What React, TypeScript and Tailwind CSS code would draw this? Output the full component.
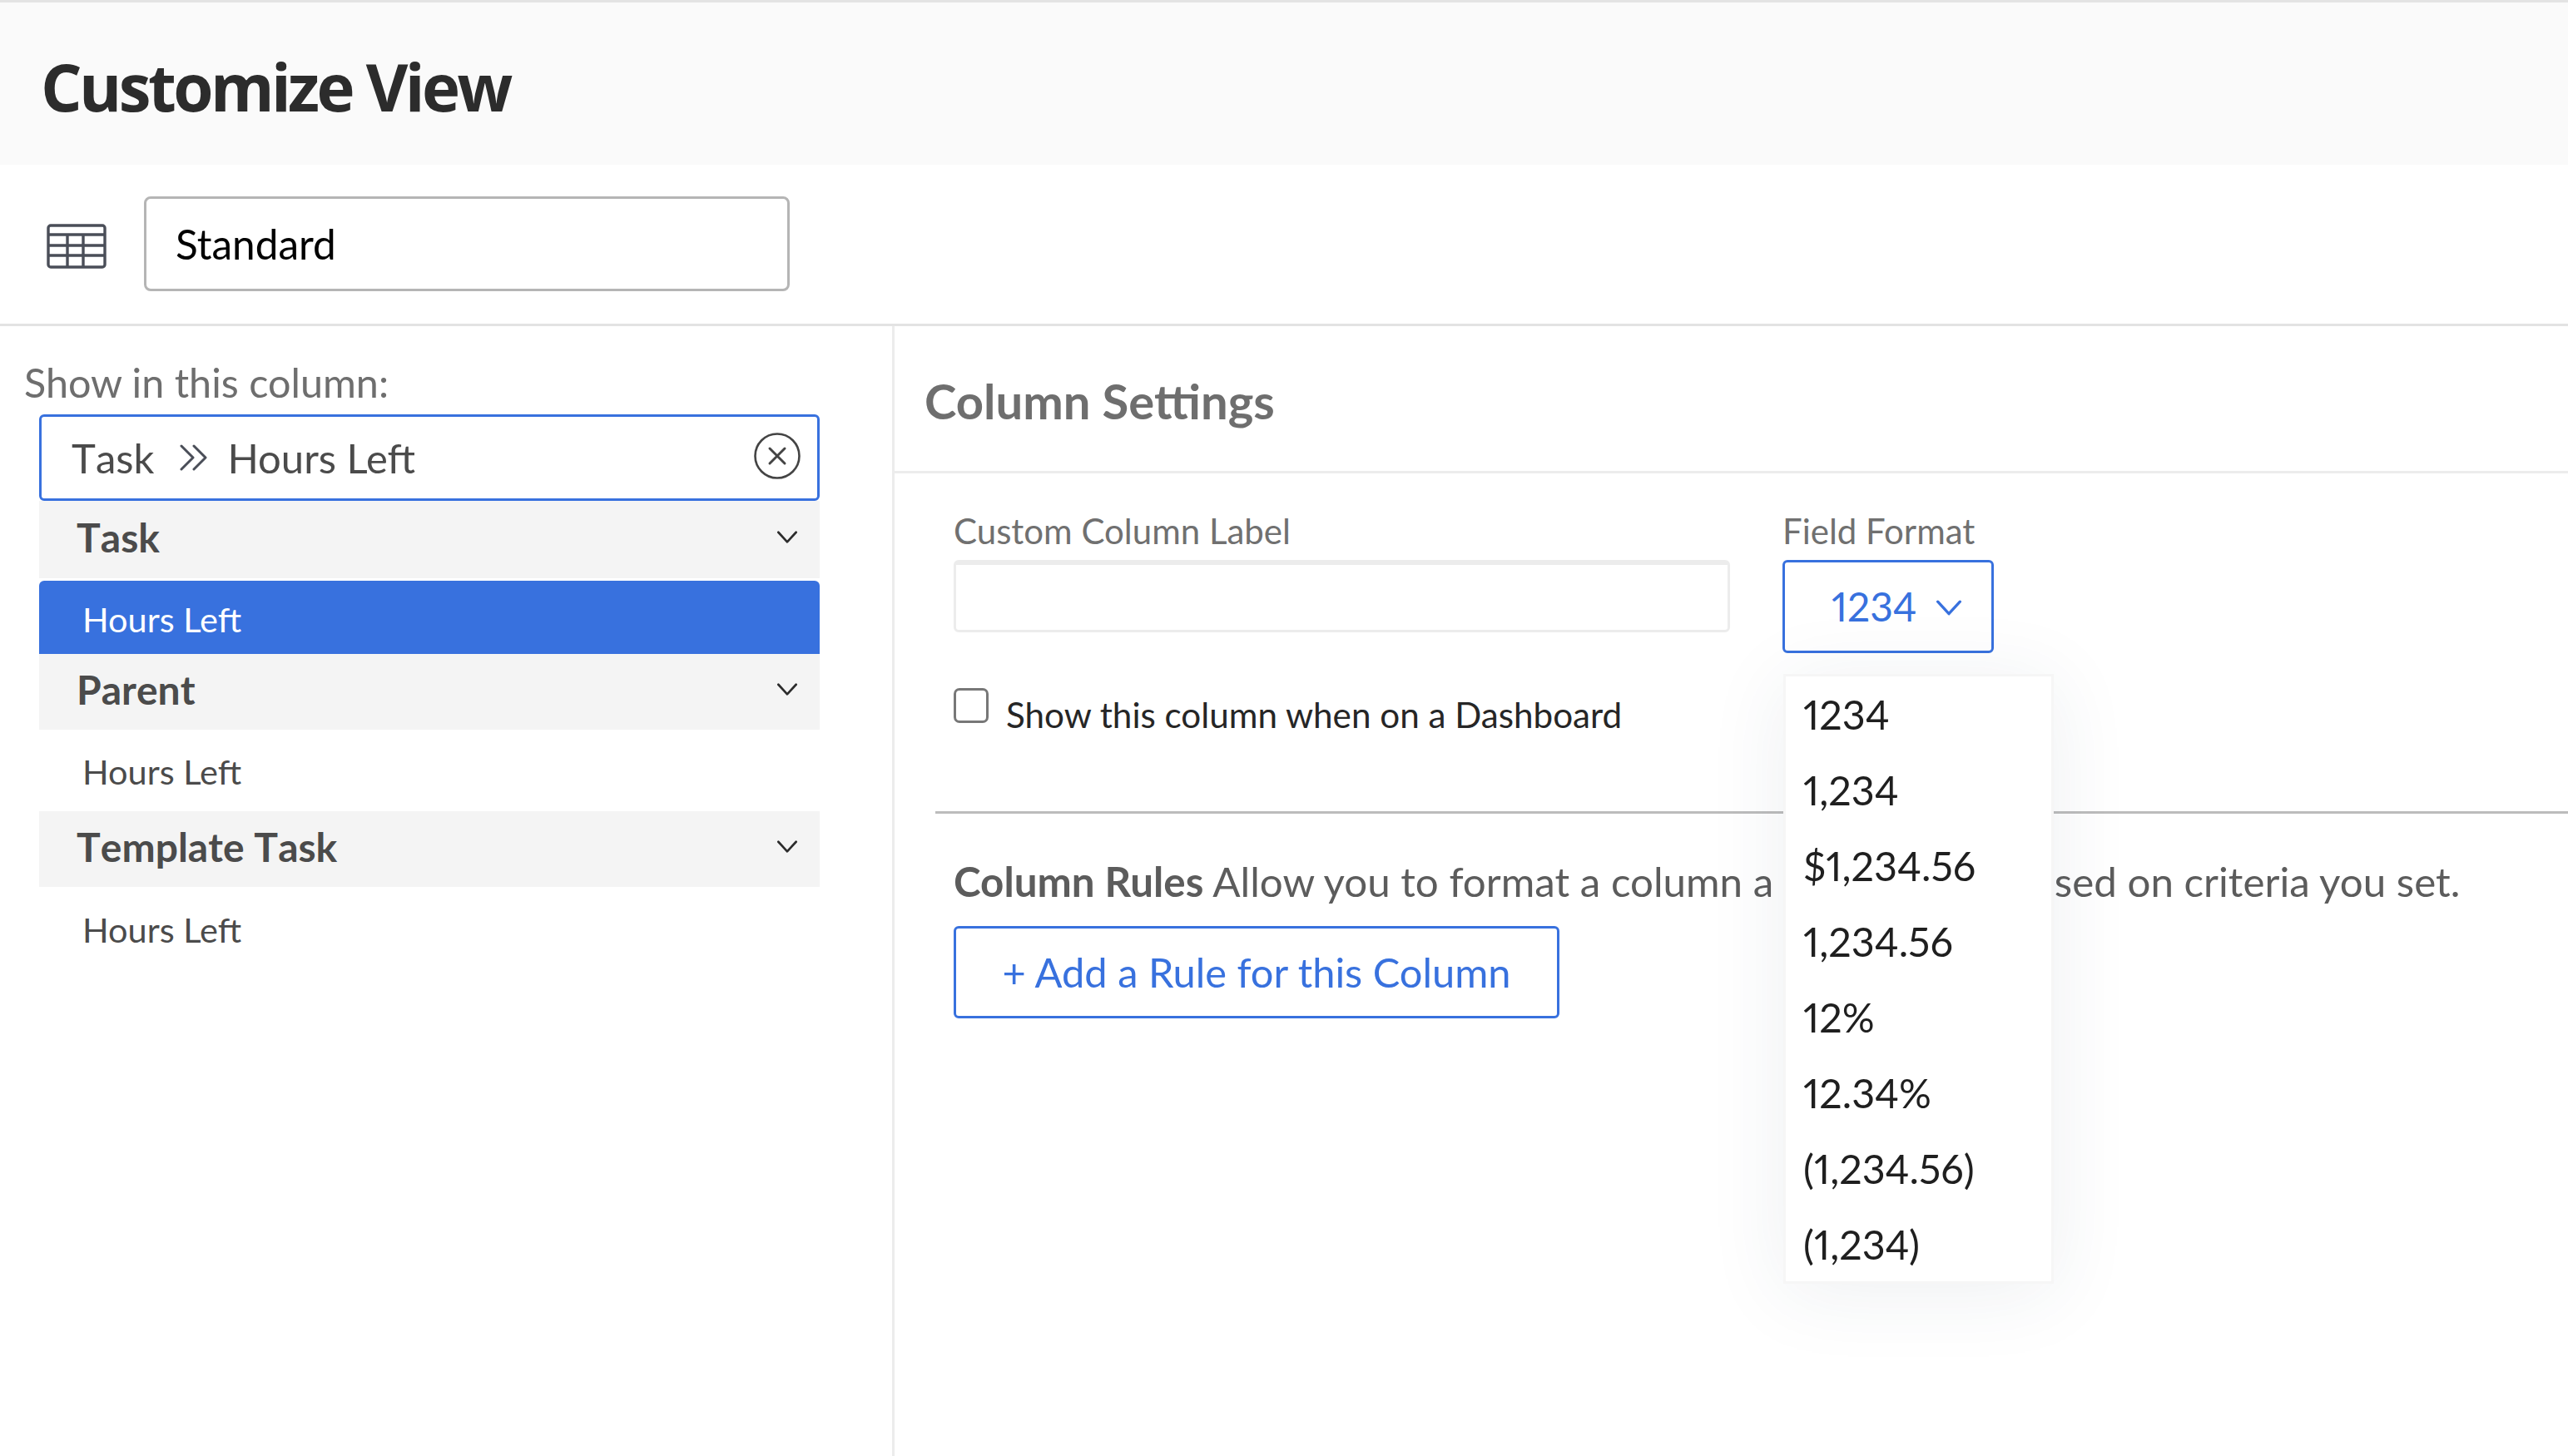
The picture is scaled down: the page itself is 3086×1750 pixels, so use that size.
const F = "font-['Lato','Liberation_Sans',sans-serif]";

function Chevron({ className }: { className: string }) {
  return (
    <svg viewBox="0 0 28 18" className={className} fill="none" stroke="currentColor" strokeWidth="3" strokeLinecap="round" strokeLinejoin="round">
      <path d="M2 2 L14 15 L26 2" />
    </svg>
  );
}

function GroupHeader({ label, h }: { label: string; h: string }) {
  return (
    <div className={`${h} bg-[#f4f4f4] flex items-center justify-between pl-[45px] pr-[26px] pb-[4px] text-[#4b4b4b]`}>
      <span className="text-[48px] font-bold leading-none [font-kerning:none]">{label}</span>
      <Chevron className="w-[26px] h-[16px] text-[#2c2c2c]" />
    </div>
  );
}

function Item({ label, active, h }: { label: string; active?: boolean; h: string }) {
  return (
    <div className={`${h} flex items-center pl-[52px] text-[41.5px] leading-none ${active ? "bg-[#3871de] text-white rounded-t-[6px] pt-[6px]" : "text-[#4b4b4b]"}`}>
      {label}
    </div>
  );
}

const formats = ["1234", "1,234", "$1,234.56", "1,234.56", "12%", "12.34%", "(1,234.56)", "(1,234)"];

export default function App() {
  return (
    <div className={`${F} w-[3086px] h-[1750px] bg-white overflow-hidden flex flex-col`}>
      <header className="h-[198px] shrink-0 border-t-[3px] border-[#e3e3e3] bg-[#fafafa] flex items-center pl-[49px] pt-[6px]">
        <h1 className="font-['Open_Sans',sans-serif] text-[78px] font-bold leading-none text-[#2c2c2c] tracking-[-3.6px]">Customize View</h1>
      </header>

      <div className="h-[194px] shrink-0 border-b-[3px] border-[#e3e3e3] flex items-center pl-[56px]">
        <svg viewBox="0 0 72 54" className="w-[72px] h-[54px] text-[#4a4e58] mt-[4px]" fill="none" stroke="currentColor" strokeWidth="3.4">
          <rect x="2" y="2" width="68" height="50" rx="3" />
          <path d="M2 13 H70 M2 26 H70 M2 38 H70 M25 13 V52 M44 13 V52" />
        </svg>
        <div className="ml-[45px] w-[776px] h-[114px] mb-[2px] border-[3px] border-[#b5b5b5] rounded-[8px] flex items-center pl-[35px] pt-[2px] text-[49.5px] text-black leading-none">
          Standard
        </div>
      </div>

      <div className="flex-1 flex min-h-0">
        <aside className="w-[1075px] shrink-0 border-r-[3px] border-[#ececec] flex flex-col pt-[43px]">
          <div className="pl-[29px] text-[48.5px] leading-none text-[#6e6e6e]">Show in this column:</div>
          <div className="mt-[14px] ml-[47px] w-[938px] flex flex-col">
            <div className="h-[104px] border-[3px] border-[#3871de] rounded-[6px] flex items-center pl-[36px] pr-[20px] text-[49px] text-[#4b4b4b] leading-none">
              <span className="[font-kerning:none] mt-[2px]">Task</span>
              <svg viewBox="0 0 36 32" className="w-[36px] h-[32px] ml-[30px] mr-[22px] text-[#4a4e58]" fill="none" stroke="currentColor" strokeWidth="3" strokeLinecap="round" strokeLinejoin="round">
                <path d="M3 2 L17 16 L3 30 M18 2 L32 16 L18 30" />
              </svg>
              <span className="mt-[2px]">Hours Left</span>
              <svg viewBox="0 0 56 56" className="w-[56px] h-[56px] ml-auto mb-[4px] text-[#444]" fill="none" stroke="currentColor" strokeWidth="2.6" strokeLinecap="round">
                <circle cx="28" cy="28" r="26.5" />
                <path d="M19 19 L37 37 M37 19 L19 37" strokeWidth="3" />
              </svg>
            </div>
            <GroupHeader label="Task" h="h-[93px]" />
            <div className="h-[3px]" />
            <Item label="Hours Left" active h="h-[88px]" />
            <GroupHeader label="Parent" h="h-[91px]" />
            <Item label="Hours Left" h="h-[98px] pt-[5px]" />
            <GroupHeader label="Template Task" h="h-[91px]" />
            <Item label="Hours Left" h="h-[104px]" />
          </div>
        </aside>

        <main className="flex-1 min-w-0 relative">
          <div className="h-[177px] border-b-[3px] border-[#ececec] flex items-center pl-[36px] pt-[5px]">
            <h2 className="text-[58px] font-bold leading-none text-[#6e6e6e]">Column Settings</h2>
          </div>
          <div className="pl-[71px] pt-[48px] flex gap-[63px]">
            <div className="flex flex-col">
              <label className="text-[42px] leading-none text-[#707070] h-[56px]">Custom Column Label</label>
              <div className="w-[933px] h-[87px] border-[3px] border-t-[6px] border-[#ececec] rounded-[6px]" />
            </div>
            <div className="flex flex-col">
              <label className="text-[42px] leading-none text-[#707070] h-[56px]">Field Format</label>
              <div className="w-[254px] h-[112px] border-[3px] border-[#3871de] rounded-[6px] flex items-center pl-[56px] text-[48px] leading-none text-[#3871de] [font-variant-numeric:proportional-nums]">
                1234
                <Chevron className="w-[32px] h-[20px] ml-[22px] mt-[4px]" />
              </div>
            </div>
          </div>
          <div className="pl-[71px] mt-[44px] flex items-start">
            <div className="w-[42px] h-[42px] mt-[-2px] border-[3px] border-[#777] rounded-[7px]" />
            <span className="ml-[21px] mt-[9px] text-[42.2px] leading-none text-[#262626]">Show this column when on a Dashboard</span>
          </div>
          <div className="ml-[49px] mt-[95px] border-t-[3px] border-[#bcbcbc]" />
          <p className="pl-[71px] mt-[57px] text-[49.3px] leading-none text-[#5c5c5c] whitespace-nowrap">
            <b className="font-bold">Column Rules</b> Allow you to format a column a specific way based on criteria you set.
          </p>
          <button className="ml-[71px] mt-[28px] w-[728px] h-[111px] border-[3px] border-[#3871de] rounded-[6px] text-[48.8px] leading-none text-[#3871de] flex items-center justify-center">
            + Add a Rule for this Column
          </button>

          <ul className="absolute left-[1068px] top-[418px] w-[325px] h-[733px] bg-white border-[3px] border-[#f6f6f6] shadow-[0_10px_90px_rgba(40,60,90,0.08)] pl-[21px] pt-[0px] text-[48.5px] leading-none text-[#1f1f1f] [font-variant-numeric:proportional-nums]">
            {formats.map((f) => (
              <li key={f} className="h-[91px] flex items-center">{f}</li>
            ))}
          </ul>
        </main>
      </div>
    </div>
  );
}
